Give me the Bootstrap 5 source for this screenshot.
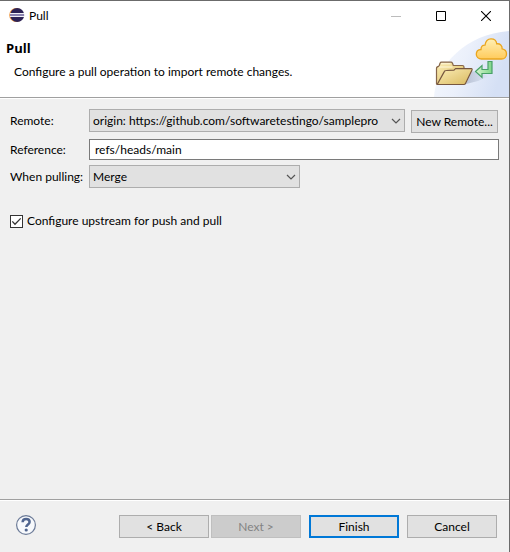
<!DOCTYPE html>
<html lang="en">
<head>
<meta charset="utf-8">
<meta name="viewport" content="width=device-width, initial-scale=1">
<title>Pull</title>
<link href="https://cdn.jsdelivr.net/npm/bootstrap@5.3.0/dist/css/bootstrap.min.css" rel="stylesheet">
<style>
body { font-family: Lato, "Open Sans", sans-serif; font-size: 12px; line-height: 16px; color: #000; background: #f0f0f0; }
.dialog { border-top: 1px solid #6b6b6b; border-right: 1px solid #6b6b6b; }
.titlebar { height: 30px; padding: 0 1px 0 9px; }
.caption-btn { width: 45px; height: 28px; }
.banner { height: 66px; }
.banner-text { padding: 9px 0 0 6px; }
.banner-title { font-family: "Open Sans", sans-serif; font-size: 13px; line-height: 16px; font-weight: 700; }
.banner-note { padding: 8px 0 0 8px; }
.etched { border-top: 1px solid #a0a0a0; border-bottom: 1px solid #fff; }
.form-area { padding: 10px 10px 0 10px; }
.field-label { width: 79px; }
.row-remote { margin-bottom: 6px; }
.row-reference { margin-bottom: 5px; }
.win-select { height: 23px; padding: 0 19px 0 3px; font-size: 12px; line-height: 16px; color: #000; border: 1px solid #adadad; border-radius: 0; background-color: #e1e1e1; background-size: 10px 6px; background-position: right 3px center;
  background-image: url("data:image/svg+xml,%3Csvg xmlns='http://www.w3.org/2000/svg' viewBox='0 0 10 6'%3E%3Cpath d='M1 1l4 4 4-4' fill='none' stroke='%23555' stroke-width='1.2'/%3E%3C/svg%3E"); }
.win-select-short { width: 211px; }
.win-input { height: 21px; min-height: 0; padding: 0 5px; font-size: 12px; line-height: 16px; color: #000; border: 1px solid #7a7a7a; border-radius: 0; }
.win-btn { height: 23px; width: 90px; padding: 0; font-size: 12px; line-height: 16px; color: #000; background: #e1e1e1; border: 1px solid #adadad; border-radius: 0; }
.win-btn:disabled { color: #838383; background: #ccc; border-color: #bfbfbf; opacity: 1; }
.win-btn-default { border: 2px solid #0078d7; }
.remote-btn { width: 87px; margin: 1px 1px 0 6px; }
.back-next { gap: 2px; }
.check-row { padding-top: 25px; }
.win-check[type="checkbox"] { width: 13px; height: 13px; border: 1px solid #333; border-radius: 0; background-color: #fff; }
.win-check[type="checkbox"]:checked { background-size: 11px 11px;
  background-image: url("data:image/svg+xml,%3Csvg xmlns='http://www.w3.org/2000/svg' viewBox='0 0 11 11'%3E%3Cpath d='M1.3 5.4l2.7 2.8 5.7-5.8' fill='none' stroke='%23333' stroke-width='1.3'/%3E%3C/svg%3E"); }
.footer-bar { padding: 14px 12px 14px 15px; }
</style>
</head>
<body>
<div class="dialog d-flex flex-column min-vh-100">
  <header class="bg-white">
    <div class="titlebar d-flex align-items-center">
      <svg width="16" height="16" viewBox="0 0 16 16" aria-hidden="true">
        <circle cx="7.2" cy="7" r="7" fill="#f0963c"/>
        <circle cx="8.2" cy="7" r="7" fill="#2c2255"/>
        <path d="M1 5h14v4H1z" fill="#8a83b0"/>
        <path d="M1 5.500h14M1 8.500h14" stroke="#f1f0f6"/>
      </svg>
      <span class="ms-1 flex-grow-1">Pull</span>
      <button type="button" class="btn caption-btn border-0 p-0 d-flex align-items-center justify-content-center" aria-label="Minimize" disabled>
        <svg width="10" height="10" viewBox="0 0 10 10"><path d="M0 5.5h10" stroke="#999"/></svg>
      </button>
      <button type="button" class="btn caption-btn border-0 p-0 d-flex align-items-center justify-content-center" aria-label="Maximize">
        <svg width="10" height="10" viewBox="0 0 10 10"><path d="M.5.5h9v9h-9z" fill="none" stroke="#000"/></svg>
      </button>
      <button type="button" class="btn caption-btn border-0 p-0 d-flex align-items-center justify-content-center" aria-label="Close">
        <svg width="10" height="10" viewBox="0 0 10 10"><path d="M0 0l10 10M10 0L0 10" stroke="#000" stroke-width="1.1"/></svg>
      </button>
    </div>
    <div class="banner d-flex justify-content-between">
      <div class="banner-text">
        <h1 class="banner-title m-0">Pull</h1>
        <p class="banner-note m-0">Configure a pull operation to import remote changes.</p>
      </div>
      <svg width="75" height="66" viewBox="0 0 75 66" aria-hidden="true">
        <defs>
          <linearGradient id="sky" x1="0" y1="0" x2="1" y2=".3"><stop offset="0" stop-color="#f6f9fe"/><stop offset=".5" stop-color="#ebf0fb"/><stop offset="1" stop-color="#d5e0f5"/></linearGradient>
          <linearGradient id="cloud" x1="0" y1="0" x2="0" y2="1"><stop offset="0" stop-color="#fff0b5"/><stop offset="1" stop-color="#ffcb5c"/></linearGradient>
          <linearGradient id="fold" x1="0" y1="0" x2="1" y2="1"><stop offset="0" stop-color="#fbedb6"/><stop offset="1" stop-color="#d9b95f"/></linearGradient>
          <linearGradient id="arrow" x1="0" y1="0" x2="1" y2="0"><stop offset="0" stop-color="#d9f5d2"/><stop offset="1" stop-color="#7fd68a"/></linearGradient>
          <linearGradient id="shade" x1="0" y1="0" x2="1" y2="0"><stop offset="0" stop-color="#9ba6bd" stop-opacity=".6"/><stop offset="1" stop-color="#9ba6bd" stop-opacity="0"/></linearGradient>
        </defs>
        <path d="M0 66C2 34 32 3 75 0v66z" fill="url(#sky)"/>
        <path d="M32 53l6-13 17 5-11 5z" fill="url(#shade)"/>
        <path d="M2.500 53V37.500c0-1.500 1-2 2.500-2.300l1-3c.3-.7.7-1 1.500-1h9.500c.8 0 1.200.4 1.500 1l.8 2.300h9c1 0 1.700.6 1.700 1.500v4L28 53.500H3.500z" fill="url(#fold)" stroke="#86664a" stroke-width="1.200" stroke-linejoin="round"/>
        <path d="M5 36h13.500M7 32.800h9.500" stroke="#fff8da"/>
        <path d="M3.300 53.300l7-12.700c.4-.8 1-1.100 2-1.100l7.700-.3 1.500-1.600h15.800c.8 0 1 .6.700 1.300L31.500 52.500c-.3.700-.9 1-1.700 1z" fill="url(#fold)" stroke="#76563f" stroke-width="1.200" stroke-linejoin="round"/>
        <path d="M41.500 40.500l6.500-6v4H54V30.500h4v12H48V46.500z" fill="url(#arrow)" stroke="#48a068" stroke-width="1.200" stroke-linejoin="miter"/>
        <path d="M47.500 28c-3.200 0-5.200-2.200-5.200-4.700 0-2.700 2-4.700 4.700-4.800-.1-2.800 1.500-4.600 4-4.400.6-4 2.800-6.300 6-6.300 3.300 0 5.500 2 5.700 5 3.300-.4 5.800 1.700 5.400 5 2.700.4 4.400 2.500 4.400 5.100 0 2.800-2 5.100-5 5.100z" fill="url(#cloud)" stroke="#eaa51e" stroke-width="1.300"/>
      </svg>
    </div>
    <div class="etched"></div>
  </header>

  <main class="form-area flex-grow-1">
    <form id="pull-form">
      <div class="d-flex row-remote">
        <label class="field-label flex-shrink-0 pt-1" for="remote">Remote:</label>
        <select id="remote" class="form-select win-select flex-fill">
          <option>origin: https://github.com/softwaretestingo/samplepro</option>
        </select>
        <button type="button" class="btn win-btn remote-btn flex-shrink-0">New Remote...</button>
      </div>
      <div class="d-flex align-items-center row-reference">
        <label class="field-label flex-shrink-0" for="reference">Reference:</label>
        <input id="reference" type="text" class="form-control win-input" value="refs/heads/main">
      </div>
      <div class="d-flex align-items-center">
        <label class="field-label flex-shrink-0" for="when">When pulling:</label>
        <select id="when" class="form-select win-select win-select-short">
          <option>Merge</option>
        </select>
      </div>
      <div class="check-row d-flex align-items-center">
        <input id="upstream" type="checkbox" class="form-check-input win-check m-0 me-1" checked>
        <label for="upstream">Configure upstream for push and pull</label>
      </div>
    </form>
  </main>

  <footer>
    <div class="etched"></div>
    <div class="footer-bar d-flex align-items-start">
      <button type="button" class="btn border-0 p-0 d-flex" aria-label="Help">
        <svg width="22" height="22" viewBox="0 1 22 22">
          <circle cx="11" cy="11" r="9.400" fill="#f7f9fc" stroke="#6b7a97" stroke-width="1.200"/>
          <path d="M7.600 8.200c.1-2 1.400-3.200 3.500-3.200s3.500 1.200 3.500 2.900c0 2.600-3.300 2.500-3.300 5.200" fill="none" stroke="#50658f" stroke-width="2.500"/>
          <circle cx="11.200" cy="16" r="1.600" fill="#50658f"/>
        </svg>
      </button>
      <div class="d-flex gap-2 ms-auto">
        <div class="d-flex back-next">
          <button type="button" class="btn win-btn">&lt; Back</button>
          <button type="button" class="btn win-btn" disabled>Next &gt;</button>
        </div>
        <button type="submit" form="pull-form" class="btn win-btn win-btn-default">Finish</button>
        <button type="button" class="btn win-btn">Cancel</button>
      </div>
    </div>
  </footer>
</div>
<script src="https://cdn.jsdelivr.net/npm/bootstrap@5.3.0/dist/js/bootstrap.bundle.min.js"></script>
</body>
</html>
